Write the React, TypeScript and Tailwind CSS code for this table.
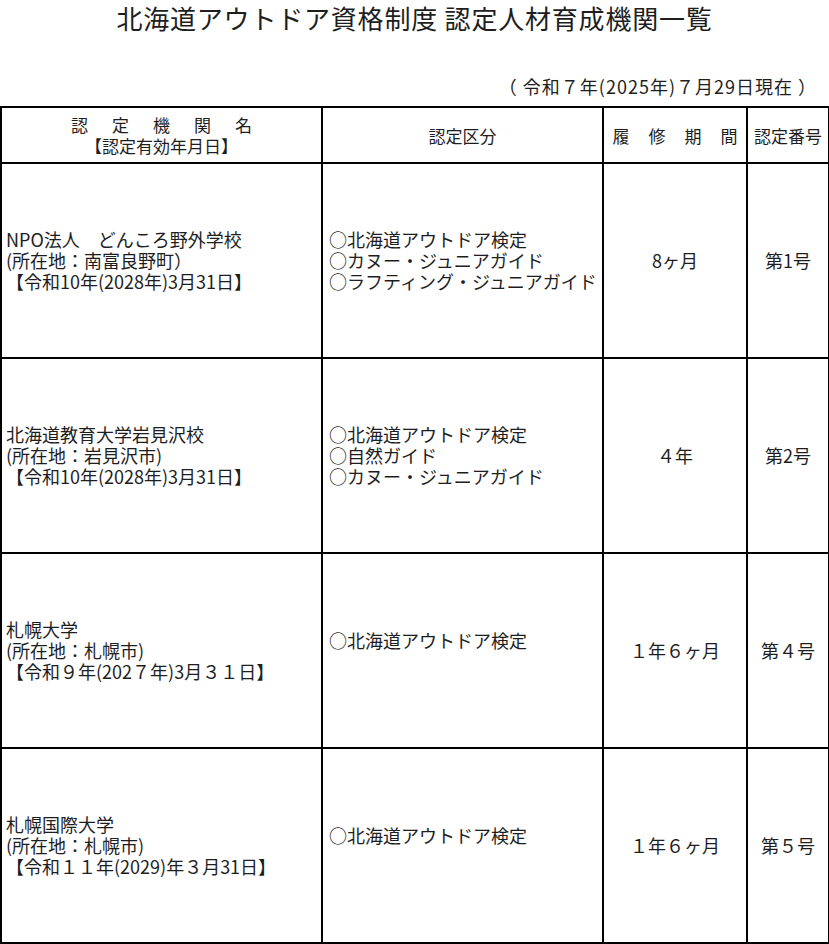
import React from 'react';

type Row = {
  name: string[];
  kinds: string[];
  period: string;
  no: string;
  kindsOffset?: boolean;
};

const rows: Row[] = [
  {
    name: ['NPO法人　どんころ野外学校', '(所在地：南富良野町）', '【令和10年(2028年)3月31日】'],
    kinds: ['○北海道アウトドア検定', '○カヌー・ジュニアガイド', '○ラフティング・ジュニアガイド'],
    period: '8ヶ月',
    no: '第1号',
  },
  {
    name: ['北海道教育大学岩見沢校', '(所在地：岩見沢市)', '【令和10年(2028年)3月31日】'],
    kinds: ['○北海道アウトドア検定', '○自然ガイド', '○カヌー・ジュニアガイド'],
    period: '４年',
    no: '第2号',
  },
  {
    name: ['札幌大学', '(所在地：札幌市)', '【令和９年(202７年)3月３１日】'],
    kinds: ['○北海道アウトドア検定'],
    period: '１年６ヶ月',
    no: '第４号',
    kindsOffset: true,
  },
  {
    name: ['札幌国際大学', '(所在地：札幌市)', '【令和１１年(2029)年３月31日】'],
    kinds: ['○北海道アウトドア検定'],
    period: '１年６ヶ月',
    no: '第５号',
    kindsOffset: true,
  },
];

const font = { fontFamily: '"Noto Sans CJK JP", "Noto Sans", sans-serif' };

export default function App() {
  return (
    <div className="w-[829px] bg-white text-[#1e1e1e]" style={font}>
      <h1 className="h-[36px] text-center text-[26px] leading-[36px] font-normal tracking-[0.8px]">
        北海道アウトドア資格制度 認定人材育成機関一覧
      </h1>
      <div className="mt-[38px] h-[32px] pr-[12px] text-right text-[18px] leading-[24px] tracking-[1px]">
        （&nbsp;令和７年(2025年)７月29日現在&nbsp;）
      </div>
      <table className="w-[828px] table-fixed border-collapse border-2 border-black">
        <colgroup>
          <col className="w-[321px]" />
          <col className="w-[281px]" />
          <col className="w-[144px]" />
          <col className="w-[82px]" />
        </colgroup>
        <thead>
          <tr className="h-[56px] text-[17px] leading-[21px]">
            <th className="border-2 border-black font-normal">
              <div className="flex justify-center gap-[24px]">
                <span>認</span><span>定</span><span>機</span><span>関</span><span>名</span>
              </div>
              <div>【認定有効年月日】</div>
            </th>
            <th className="border-2 border-black font-normal">認定区分</th>
            <th className="border-2 border-black font-normal">
              <div className="flex justify-center gap-[19px] whitespace-nowrap">
                <span>履</span><span>修</span><span>期</span><span>間</span>
              </div>
            </th>
            <th className="border-2 border-black font-normal whitespace-nowrap">認定番号</th>
          </tr>
        </thead>
        <tbody>
          {rows.map((r) => (
            <tr key={r.no} className="h-[195px] text-[18px] leading-[21px]">
              <td className="border-2 border-black pl-[4px] align-middle">
                {r.name.map((l) => (
                  <div key={l} className="whitespace-nowrap">{l}</div>
                ))}
              </td>
              <td className="border-2 border-black pl-[6px] align-middle">
                <div className={r.kindsOffset ? 'pb-[20px]' : ''}>
                  {r.kinds.map((l) => (
                    <div key={l} className="whitespace-nowrap">{l}</div>
                  ))}
                </div>
              </td>
              <td className="border-2 border-black text-center align-middle">{r.period}</td>
              <td className="border-2 border-black text-center align-middle">{r.no}</td>
            </tr>
          ))}
        </tbody>
      </table>
    </div>
  );
}
